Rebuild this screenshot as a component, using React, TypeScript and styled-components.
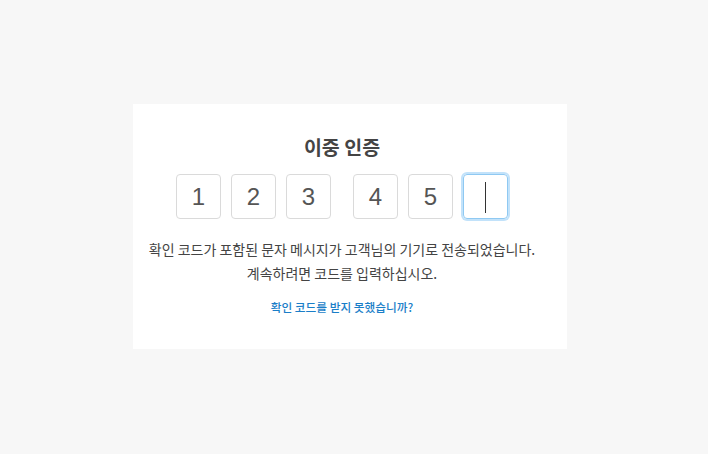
import React from "react";
import styled, { createGlobalStyle } from "styled-components";

const Global = createGlobalStyle`
  html, body { margin: 0; padding: 0; background: #f7f7f7; }
  body { font-family: "Noto Sans CJK KR", "Noto Sans", sans-serif; }
`;

const Page = styled.div`
  display: flex;
  justify-content: center;
  padding-top: 104px;
  padding-right: 8px;
`;

const Card = styled.div`
  box-sizing: border-box;
  width: 434px;
  height: 245px;
  background: #ffffff;
  display: flex;
  flex-direction: column;
  align-items: center;
  padding: 29px 16px 0 0;
`;

const Title = styled.h1`
  margin: 0;
  font-size: 19.5px;
  line-height: 28px;
  font-weight: 700;
  color: #444444;
`;

const Code = styled.div`
  display: flex;
  gap: 22px;
  margin-top: 13px;
`;

const Group = styled.div`
  display: flex;
  gap: 10px;
`;

const Digit = styled.div<{ $focused?: boolean }>`
  box-sizing: border-box;
  width: 45px;
  height: 45px;
  border-radius: 4px;
  border: 1px solid ${(p) => (p.$focused ? "#8fc9f2" : "#dadada")};
  box-shadow: ${(p) => (p.$focused ? "0 0 0 2px #c2e2fa" : "none")};
  display: flex;
  align-items: center;
  justify-content: center;
  font-family: "Liberation Sans", Arial, sans-serif;
  font-size: 24px;
  color: #555555;
`;

const Caret = styled.span`
  display: block;
  width: 1.5px;
  height: 31px;
  margin-top: 1px;
  background: #333333;
`;

const Message = styled.p`
  margin: 18px 0 0;
  font-size: 14px;
  line-height: 24px;
  color: #444444;
  text-align: center;
`;

const Link = styled.a`
  margin-top: 12px;
  font-size: 11.7px;
  line-height: 20px;
  font-weight: 500;
  color: #1a7ec8;
  text-decoration: none;
  cursor: pointer;
`;

export default function App() {
  return (
    <>
      <Global />
      <Page>
        <Card>
          <Title>이중 인증</Title>
          <Code>
            <Group>
              <Digit>1</Digit>
              <Digit>2</Digit>
              <Digit>3</Digit>
            </Group>
            <Group>
              <Digit>4</Digit>
              <Digit>5</Digit>
              <Digit $focused>
                <Caret />
              </Digit>
            </Group>
          </Code>
          <Message>
            확인 코드가 포함된 문자 메시지가 고객님의 기기로 전송되었습니다.
            <br />
            계속하려면 코드를 입력하십시오.
          </Message>
          <Link>확인 코드를 받지 못했습니까?</Link>
        </Card>
      </Page>
    </>
  );
}
